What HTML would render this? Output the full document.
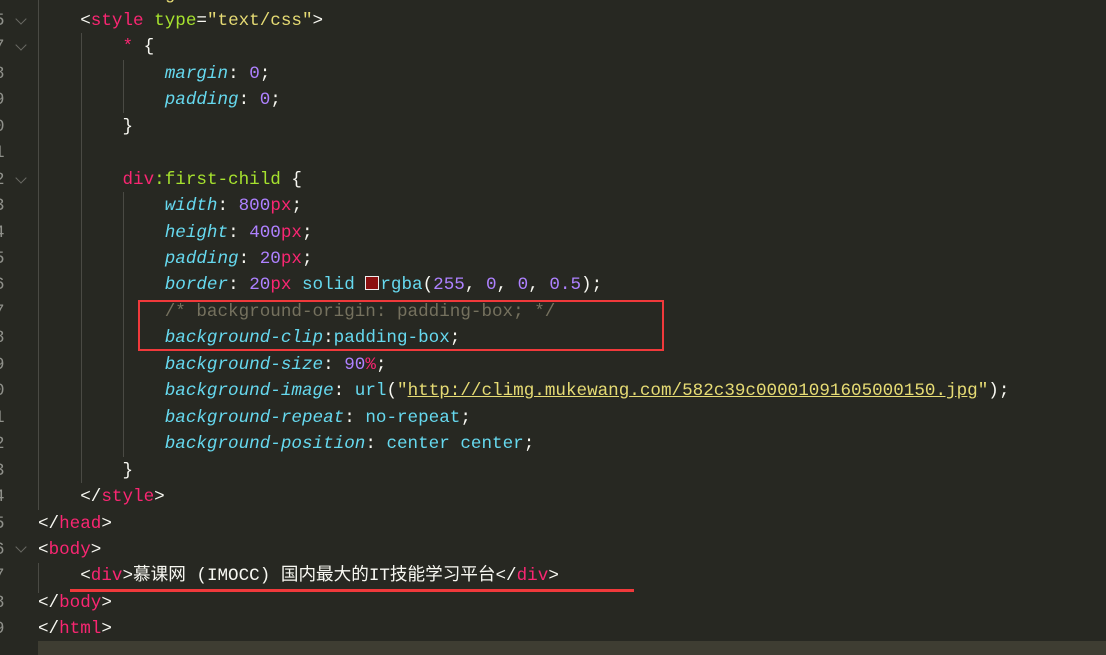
<!DOCTYPE html>
<html><head><meta charset="utf-8"><style>
html,body{margin:0;padding:0;background:#272822;width:1106px;height:655px;overflow:hidden;position:relative}
.code{position:absolute;left:38px;top:-18.5px;font-family:"Liberation Mono","Noto Sans CJK SC",monospace;font-size:17.6px;line-height:26.45px;color:#f8f8f2;white-space:pre}
.gut{position:absolute;left:-6px;top:-18.5px;font-family:"Liberation Mono",monospace;font-size:17.6px;line-height:26.45px;color:#8f908a;white-space:pre}
.t{color:#f92672}.a{color:#a6e22e}.s{color:#e6db74}.p{color:#66d9ef;font-style:italic}.n{color:#ae81ff}.c{color:#66d9ef}.cm{color:#75715e}
.fold{position:absolute;left:17px;width:7px;height:7px;border-right:1.5px solid #6a6a64;border-bottom:1.5px solid #6a6a64;transform:rotate(45deg)}
.g{position:absolute;width:1px;background:#4a4a44}
.hl{position:absolute;left:38px;top:641px;width:1068px;height:14px;background:#3e3d32}
.box{position:absolute;left:138px;top:300px;width:522px;height:47px;border:2.5px solid #f0393b}
.ul{position:absolute;left:70px;top:589px;width:564px;height:3px;background:#f0393b}
.sw{display:inline-block;width:12px;height:12px;background:#8b1010;border:1.5px solid #eee;vertical-align:-1px;margin-right:1px}
</style></head><body>
<div class="hl"></div>
<div class="gut">
5
7
8
9
0
1
2
3
4
5
6
7
8
9
0
1
2
3
4
5
6
7
8
9</div>
<div class="fold" style="top:15px"></div>
<div class="fold" style="top:41px"></div>
<div class="fold" style="top:174px"></div>
<div class="fold" style="top:543px"></div>
<div class="g" style="left:38px;top:0;height:510px"></div>
<div class="g" style="left:81px;top:33px;height:450px"></div>
<div class="g" style="left:123px;top:60px;height:53px"></div>
<div class="g" style="left:123px;top:192px;height:265px"></div>
<div class="g" style="left:38px;top:563px;height:30px"></div>
<div class="code">    <span class="s">        g  </span>
    &lt;<span class="t">style</span> <span class="a">type</span>=<span class="s">"text/css"</span>&gt;
        <span class="t">*</span> {
            <span class="p">margin</span>: <span class="n">0</span>;
            <span class="p">padding</span>: <span class="n">0</span>;
        }

        <span class="t">div</span><span class="a">:first-child</span> {
            <span class="p">width</span>: <span class="n">800</span><span class="t">px</span>;
            <span class="p">height</span>: <span class="n">400</span><span class="t">px</span>;
            <span class="p">padding</span>: <span class="n">20</span><span class="t">px</span>;
            <span class="p">border</span>: <span class="n">20</span><span class="t">px</span> <span class="c">solid</span> <span class="sw"></span><span class="c">rgba</span>(<span class="n">255</span>, <span class="n">0</span>, <span class="n">0</span>, <span class="n">0.5</span>);
            <span class="cm">/* background-origin: padding-box; */</span>
            <span class="p">background-clip</span>:<span class="c">padding-box</span>;
            <span class="p">background-size</span>: <span class="n">90</span><span class="t">%</span>;
            <span class="p">background-image</span>: <span class="c">url</span>(<span class="s">"<u>http://climg.mukewang.com/582c39c00001091605000150.jpg</u>"</span>);
            <span class="p">background-repeat</span>: <span class="c">no-repeat</span>;
            <span class="p">background-position</span>: <span class="c">center center</span>;
        }
    &lt;/<span class="t">style</span>&gt;
&lt;/<span class="t">head</span>&gt;
&lt;<span class="t">body</span>&gt;
    &lt;<span class="t">div</span>&gt;慕课网 (IMOCC) 国内最大的IT技能学习平台&lt;/<span class="t">div</span>&gt;
&lt;/<span class="t">body</span>&gt;
&lt;/<span class="t">html</span>&gt;</div>
<div class="box"></div>
<div class="ul"></div>
</body></html>
